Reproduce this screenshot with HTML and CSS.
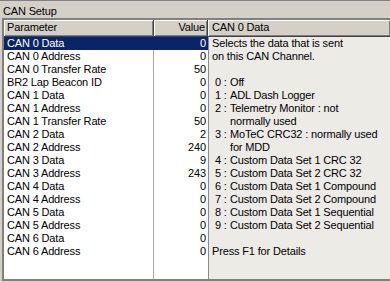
FILE: index.html
```html
<!DOCTYPE html>
<html lang="en">
<head>
    <meta charset="UTF-8">
    <meta name="viewport" content="width=device-width, initial-scale=1.0">
    <title>CAN Setup</title>
    <link rel="stylesheet" href="styles.css">
</head>
<body>

    <div class="title">CAN Setup</div>

    <div class="frame">
        <div class="list">
            <div class="row head">
                <div class="c-name">Parameter</div>
                <div class="c-val">Value</div>
            </div>
            <div class="row sel"><div class="c-name">CAN 0 Data</div><div class="c-val">0</div></div>
            <div class="row"><div class="c-name">CAN 0 Address</div><div class="c-val">0</div></div>
            <div class="row"><div class="c-name">CAN 0 Transfer Rate</div><div class="c-val">50</div></div>
            <div class="row"><div class="c-name">BR2 Lap Beacon ID</div><div class="c-val">0</div></div>
            <div class="row"><div class="c-name">CAN 1 Data</div><div class="c-val">0</div></div>
            <div class="row"><div class="c-name">CAN 1 Address</div><div class="c-val">0</div></div>
            <div class="row"><div class="c-name">CAN 1 Transfer Rate</div><div class="c-val">50</div></div>
            <div class="row"><div class="c-name">CAN 2 Data</div><div class="c-val">2</div></div>
            <div class="row"><div class="c-name">CAN 2 Address</div><div class="c-val">240</div></div>
            <div class="row"><div class="c-name">CAN 3 Data</div><div class="c-val">9</div></div>
            <div class="row"><div class="c-name">CAN 3 Address</div><div class="c-val">243</div></div>
            <div class="row"><div class="c-name">CAN 4 Data</div><div class="c-val">0</div></div>
            <div class="row"><div class="c-name">CAN 4 Address</div><div class="c-val">0</div></div>
            <div class="row"><div class="c-name">CAN 5 Data</div><div class="c-val">0</div></div>
            <div class="row"><div class="c-name">CAN 5 Address</div><div class="c-val">0</div></div>
            <div class="row"><div class="c-name">CAN 6 Data</div><div class="c-val">0</div></div>
            <div class="row"><div class="c-name">CAN 6 Address</div><div class="c-val">0</div></div>
            <div class="row fill"><div class="c-name"></div><div class="c-val"></div></div>
        </div>

        <div class="desc">
            <div class="desc-head">CAN 0 Data</div>
            <div class="desc-body">
                <div class="line">Selects the data that is sent</div>
                <div class="line">on this CAN Channel.</div>
                <div class="line"></div>
                <div class="opt"><span class="k">0 :</span><span>Off</span></div>
                <div class="opt"><span class="k">1 :</span><span>ADL Dash Logger</span></div>
                <div class="opt"><span class="k">2 :</span><span>Telemetry Monitor : not normally used</span></div>
                <div class="opt"><span class="k">3 :</span><span>MoTeC CRC32 : normally used for MDD</span></div>
                <div class="opt"><span class="k">4 :</span><span>Custom Data Set 1 CRC 32</span></div>
                <div class="opt"><span class="k">5 :</span><span>Custom Data Set 2 CRC 32</span></div>
                <div class="opt"><span class="k">6 :</span><span>Custom Data Set 1 Compound</span></div>
                <div class="opt"><span class="k">7 :</span><span>Custom Data Set 2 Compound</span></div>
                <div class="opt"><span class="k">8 :</span><span>Custom Data Set 1 Sequential</span></div>
                <div class="opt"><span class="k">9 :</span><span>Custom Data Set 2 Sequential</span></div>
                <div class="line"></div>
                <div class="line">Press F1 for Details</div>
            </div>
        </div>
    </div>

</body>
</html>
```

FILE: styles.css
```css
body {
    font-family: "Liberation Sans", Arial, sans-serif;
    font-size: 11px;
    letter-spacing: -0.15px;
    color: #000;
    background-color: #d4d0c8;
    margin: 0;
    padding: 0;
    width: 390px;
    height: 282px;
    overflow: hidden;
}

/* Window caption strip */
.title {
    height: 18px;
    box-sizing: border-box;
    border-top: 1px solid #808080;
    padding: 4px 3px 0;
    line-height: 13px;
}

/* Sunken frame holding list + description */
.frame {
    display: flex;
    height: 263px;
    box-sizing: border-box;
    margin-left: 2px;
    border-style: solid;
    border-color: #808080;
    border-width: 2px 0 2px 2px;
}

/* Parameter list */
.list {
    width: 204px;
    display: flex;
    flex-direction: column;
    background-color: #fff;
}

.row {
    display: grid;
    grid-template-columns: 150px 54px;
    height: 13px;
    line-height: 13px;
}

.c-name {
    padding-left: 3px;
    border-right: 1px solid #a8a8a8;
    white-space: nowrap;
}

.c-val {
    text-align: right;
    padding-right: 2px;
}

.row.sel .c-name,
.row.sel .c-val {
    background-color: #0a246a;
    color: #fff;
    border-right-color: #0a246a;
}

.row.fill {
    flex: 1;
}

/* Column headers */
.row.head {
    height: 17px;
    line-height: 15px;
}

.row.head .c-name,
.row.head .c-val,
.desc-head {
    background-color: #d4d0c8;
    border-bottom: 1px solid #404040;
    border-right: 1px solid #404040;
    box-shadow: inset 1px 1px #fff, inset -1px -1px #808080;
}

.row.head .c-name {
    padding-left: 3px;
}

/* Description panel */
.desc {
    flex: 1;
    display: flex;
    flex-direction: column;
}

.desc-head {
    height: 17px;
    box-sizing: border-box;
    line-height: 15px;
    padding-left: 4px;
    border-right: none;
}

.desc-body {
    flex: 1;
    background-color: #edebe6;
    border-left: 1px solid #8a8a8a;
    padding-left: 3px;
    line-height: 13px;
    white-space: nowrap;
}

.line {
    height: 13px;
}

.opt {
    display: flex;
    padding-left: 3px;
}

.opt .k {
    flex: 0 0 15px;
}

.opt span:last-child {
    white-space: normal;
    width: 150px;
}
```
